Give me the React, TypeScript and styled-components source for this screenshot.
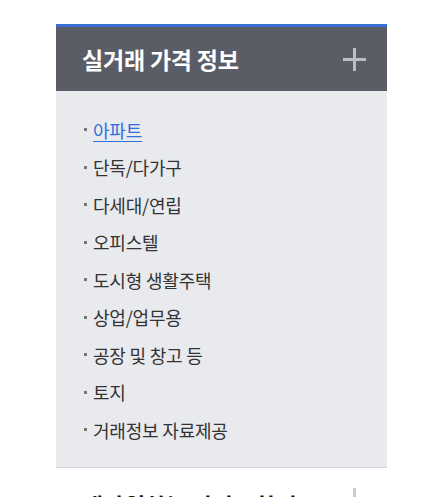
import styled, { createGlobalStyle } from 'styled-components';

const GlobalStyle = createGlobalStyle`
  body {
    margin: 0;
    background: #ffffff;
    font-family: "Noto Sans CJK KR", "Noto Sans", sans-serif;
  }
`;

const Page = styled.div`
  padding: 24px 0 0 56px;
  height: 473px;
  overflow: hidden;
`;

const Panel = styled.section`
  width: 331px;
`;

const Header = styled.div<{ $open?: boolean }>`
  display: flex;
  align-items: center;
  justify-content: space-between;
  height: 64px;
  padding: 0 20px 0 26px;
  background: ${({ $open }) => ($open ? '#5a5d66' : '#ffffff')};
  border-top: ${({ $open }) => ($open ? '3px solid #3a6fd6' : 'none')};
`;

const Title = styled.h2<{ $open?: boolean }>`
  margin: 0;
  font-size: 23px;
  font-weight: 700;
  letter-spacing: -0.2px;
  color: ${({ $open }) => ($open ? '#ffffff' : '#111111')};
`;

const Plus = styled.span<{ $open?: boolean }>`
  position: relative;
  width: 23px;
  height: 23px;
  margin-right: 1px;

  &::before,
  &::after {
    content: '';
    position: absolute;
    background: ${({ $open }) => ($open ? '#b9bdc6' : '#c8ccd6')};
  }
  &::before {
    left: 0;
    right: 0;
    top: 10px;
    height: 3px;
  }
  &::after {
    top: 0;
    bottom: 0;
    left: 10px;
    width: 3px;
  }
`;

const List = styled.ul`
  margin: 0;
  padding: 20px 0 18px 28px;
  list-style: none;
  background: #e9eaee;
  border-bottom: 1px solid #d0d3d9;
`;

const Item = styled.li`
  display: flex;
  align-items: center;
  height: 37.5px;
  font-size: 18px;
  letter-spacing: -0.2px;
  color: #333333;

  &::before {
    content: '';
    width: 3px;
    height: 3px;
    margin-right: 6px;
    background: #777777;
  }
`;

const ItemLink = styled.a<{ $active?: boolean }>`
  color: ${({ $active }) => ($active ? '#2f6fde' : '#333333')};
  text-decoration: ${({ $active }) => ($active ? 'underline' : 'none')};
  text-underline-offset: 3px;
`;

const NextHeader = styled(Header)`
  align-items: flex-start;
  padding-top: 20px;
`;

const menu = [
  '아파트',
  '단독/다가구',
  '다세대/연립',
  '오피스텔',
  '도시형 생활주택',
  '상업/업무용',
  '공장 및 창고 등',
  '토지',
  '거래정보 자료제공',
];

export default function App() {
  return (
    <>
      <GlobalStyle />
      <Page>
        <Panel>
          <Header $open>
            <Title $open>실거래 가격 정보</Title>
            <Plus $open />
          </Header>
          <List>
            {menu.map((name, i) => (
              <Item key={name}>
                <ItemLink href="#" $active={i === 0}>
                  {name}
                </ItemLink>
              </Item>
            ))}
          </List>
          <NextHeader>
            <Title>내가원하는 아파트찾기</Title>
            <Plus />
          </NextHeader>
        </Panel>
      </Page>
    </>
  );
}
